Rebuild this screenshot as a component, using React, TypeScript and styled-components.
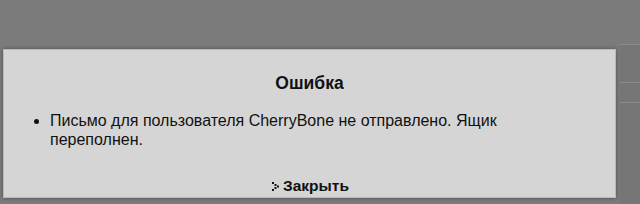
import styled, { createGlobalStyle } from 'styled-components'

const GlobalStyle = createGlobalStyle`
  html, body {
    margin: 0;
    padding: 0;
    background: #7b7b7b;
    font-family: "Liberation Sans", Arial, sans-serif;
  }
`

const Page = styled.div`
  position: relative;
  width: 640px;
  height: 204px;
  overflow: hidden;
  background: #7b7b7b;
  padding-top: 49px;
  box-sizing: border-box;
`

const Backdrop = styled.div`
  position: absolute;
  right: 0;
  top: 44px;
  width: 20px;
  height: 160px;
  border-top: 1px solid #8a8a8a;
  background: #767676;
`

const BackLine = styled.div<{ $top: number }>`
  position: absolute;
  right: 0;
  top: ${(p) => p.$top}px;
  width: 20px;
  height: 1px;
  background: #8c8c8c;
`

const Dialog = styled.div`
  position: relative;
  margin-left: 3px;
  width: 611px;
  height: 147px;
  background: #d5d5d5;
  border: 1px solid #b9b9b9;
  box-shadow: 0 0 4px rgba(0, 0, 0, 0.35);
  display: flex;
  flex-direction: column;
  align-items: center;
  color: #111;
`

const Title = styled.h2`
  margin: 22px 0 0;
  font-size: 17.5px;
  font-weight: bold;
  line-height: 22px;
`

const Messages = styled.ul`
  align-self: stretch;
  margin: 17px 0 0;
  padding: 0 90px 0 46px;
  font-size: 16px;
  line-height: 19px;
`

const Message = styled.li`
  padding-left: 0;
`

const Close = styled.a`
  margin-top: auto;
  margin-bottom: 2px;
  display: flex;
  align-items: center;
  gap: 3px;
  font-size: 15.5px;
  font-weight: bold;
  color: #111;
  text-decoration: none;
  line-height: 18px;
  cursor: pointer;
  margin-left: 2px;
`

function DotArrow() {
  return (
    <svg width="8" height="9" viewBox="0 0 8 9">
      <g fill="#111">
        <rect x="0" y="0" width="2" height="2" />
        <rect x="2.5" y="2" width="2" height="2" />
        <rect x="5" y="3.5" width="2" height="2" />
        <rect x="2.5" y="5" width="2" height="2" />
        <rect x="0" y="7" width="2" height="2" />
      </g>
    </svg>
  )
}

export default function App() {
  return (
    <>
      <GlobalStyle />
      <Page>
        <Backdrop />
        <BackLine $top={82} />
        <BackLine $top={102} />
        <Dialog>
          <Title>Ошибка</Title>
          <Messages>
            <Message>
              Письмо для пользователя CherryBone не отправлено. Ящик переполнен.
            </Message>
          </Messages>
          <Close>
            <DotArrow />
            Закрыть
          </Close>
        </Dialog>
      </Page>
    </>
  )
}
